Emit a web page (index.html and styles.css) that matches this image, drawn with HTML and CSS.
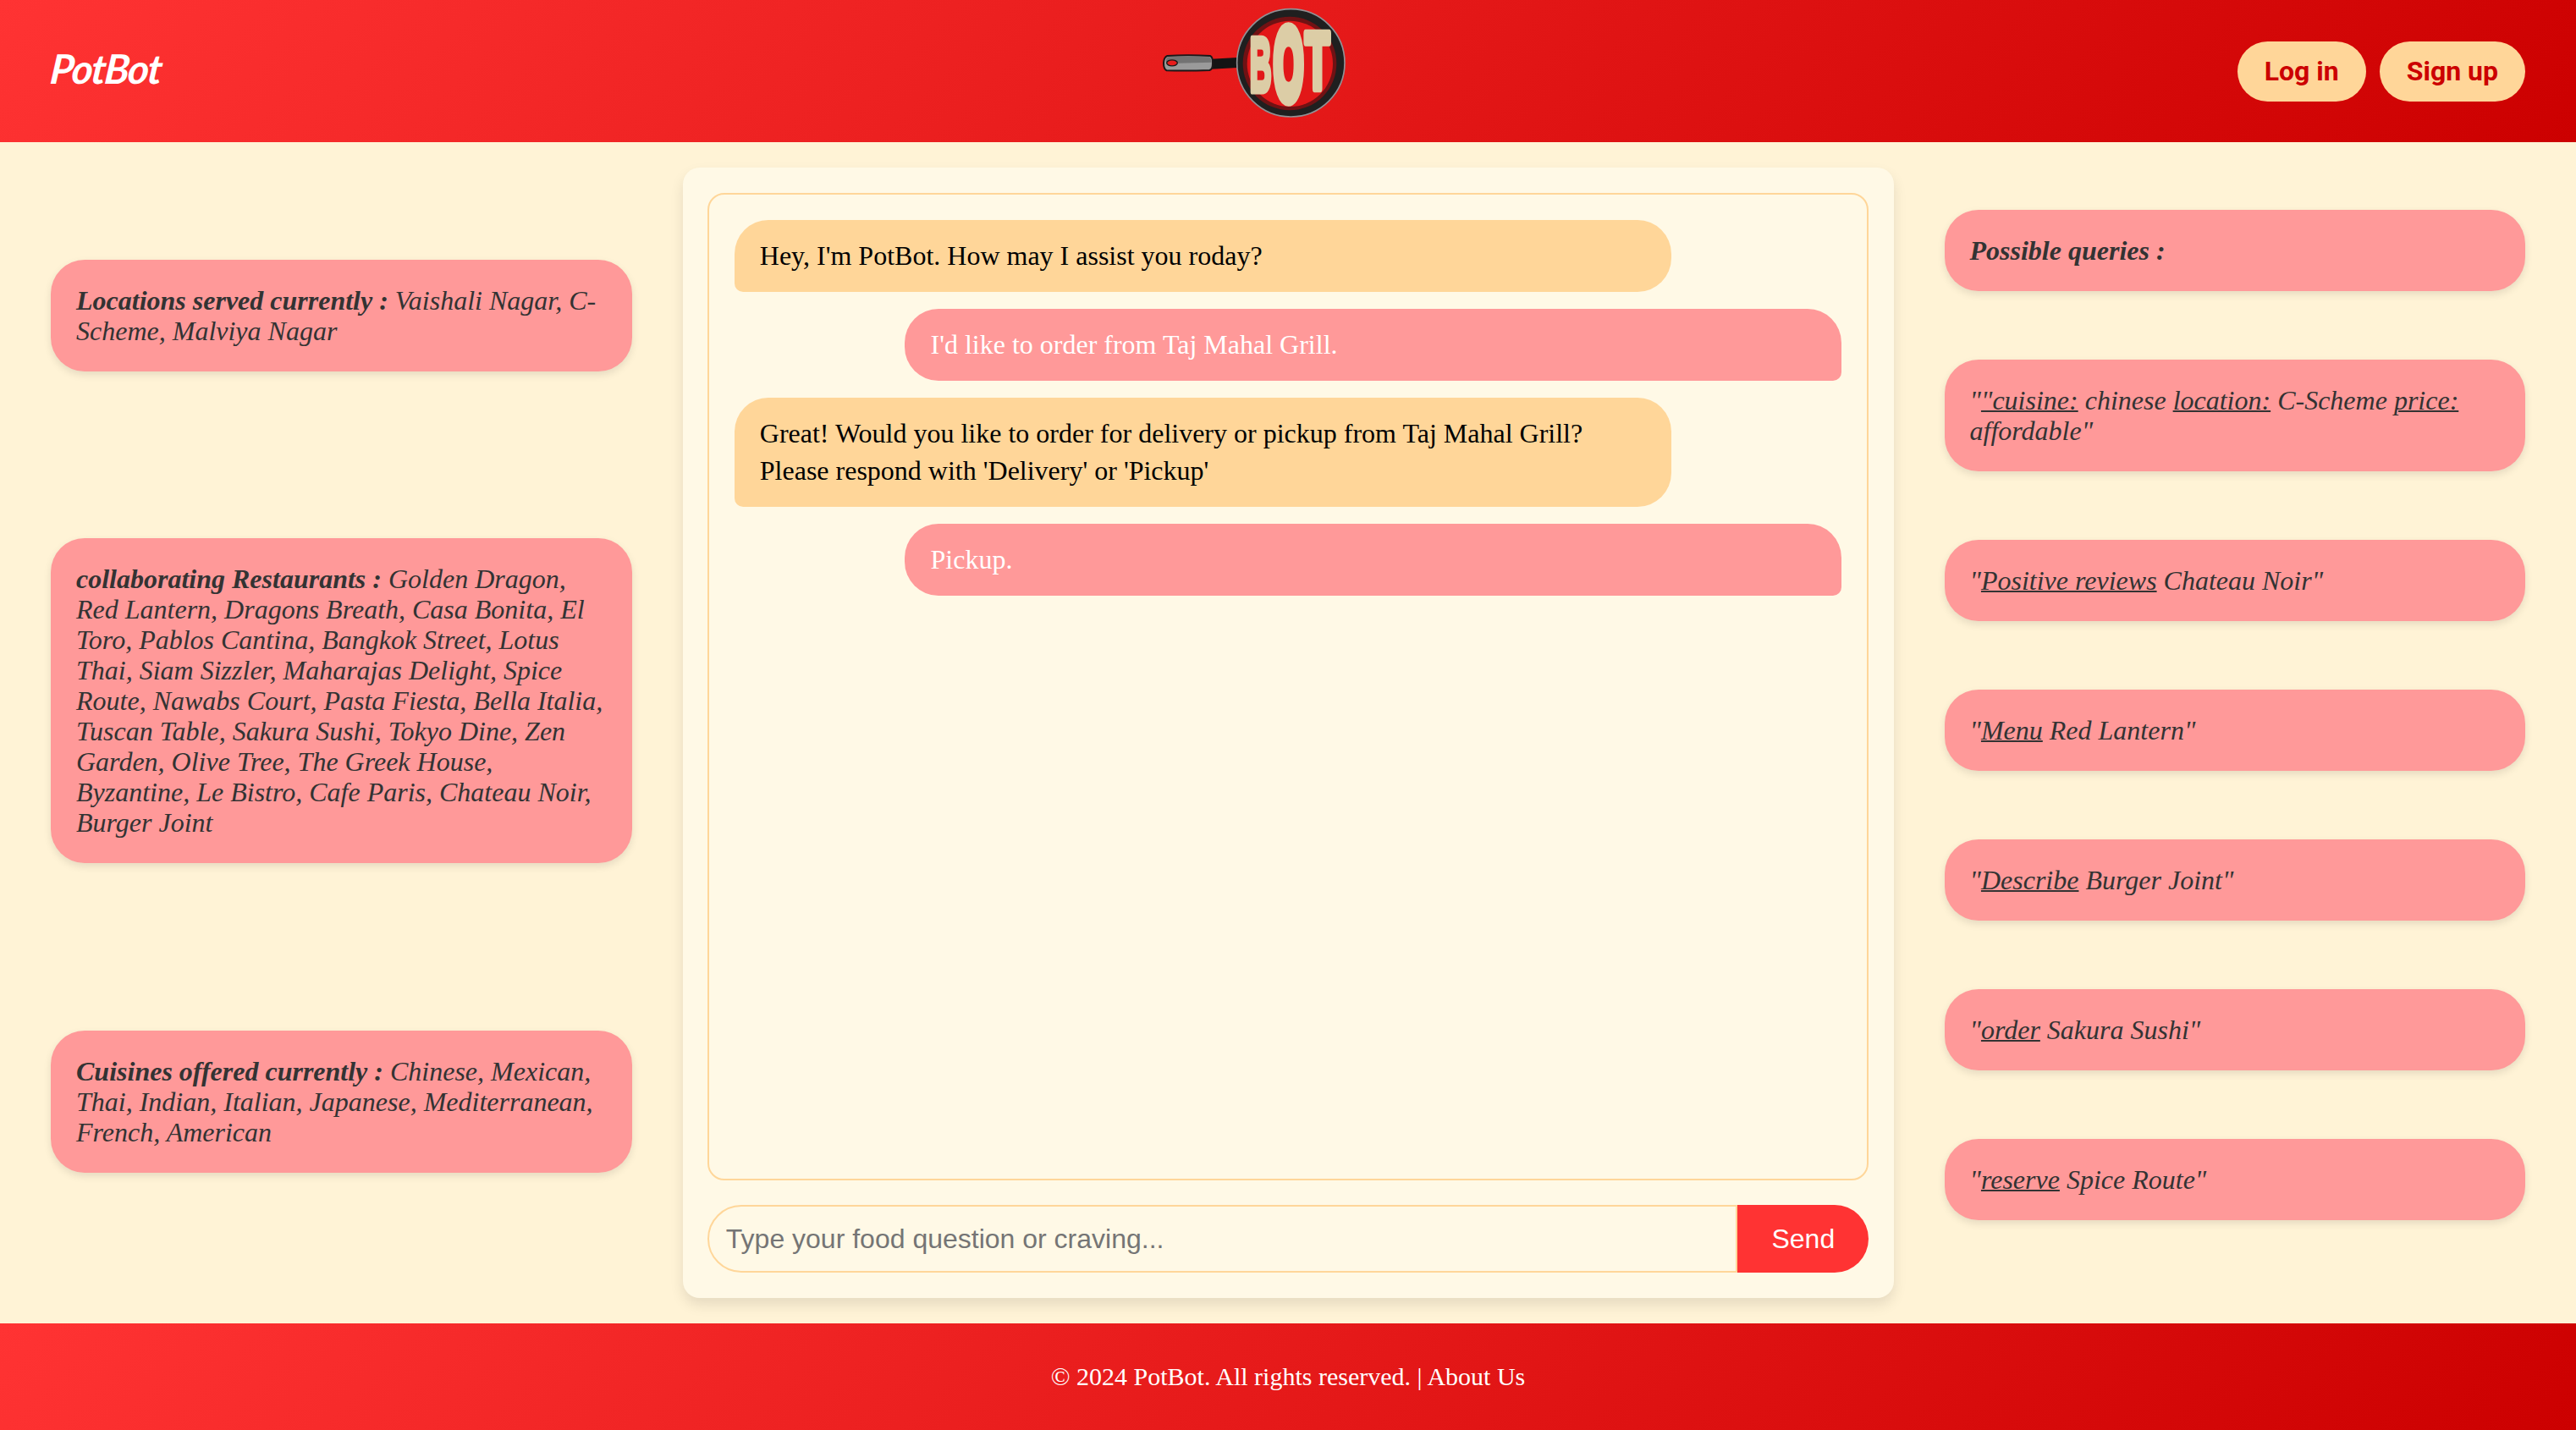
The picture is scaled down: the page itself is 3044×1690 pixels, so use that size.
FILE: index.html
```html
<!DOCTYPE html>
<html lang="en">
<head>
<meta charset="utf-8">
<title>PotBot</title>
<link rel="stylesheet" href="styles.css">
</head>
<body>
<header class="header">
  <div class="brand"><span class="brand-name">PotBot</span></div>
  <svg class="logo" viewBox="0 0 780 504" aria-label="PotBot logo">
    <path d="M244 209 L336 204 V240 L244 245Z" fill="#141414"/>
    <path d="M88 198 Q160 194 240 198 Q250 202 249 224 Q249 246 238 249 Q160 252 86 250 Q75 244 75 224 Q76 202 88 198Z" fill="#9a9a9a" stroke="#1b1718" stroke-width="6"/>
    <path d="M90 202 Q160 198 238 202 Q245 208 245 221 L126 224 Q124 212 106 211 Q92 211 84 220 Q82 206 90 202Z" fill="#737373"/>
    <ellipse cx="105" cy="223" rx="19" ry="10.500" fill="#e81c1c" stroke="#1b1718" stroke-width="4"/>
    <circle cx="526" cy="223" r="191" fill="#1f1f1f" stroke="#919195" stroke-width="5"/>
    <circle cx="522" cy="225" r="166" fill="#701214"/>
    <circle cx="523" cy="226" r="152" fill="#e21718"/>
    <g class="logo-letters">
      <text stroke-width="8" transform="translate(380 323) scale(1.07 2.7)">B</text>
      <text stroke-width="13" transform="translate(466 351) scale(1.34 3.57)">O</text>
      <text stroke-width="10" transform="translate(577 315) scale(1.42 2.81)">T</text>
    </g>
  </svg>
  <nav class="actions">
    <a class="pill">Log in</a>
    <a class="pill">Sign up</a>
  </nav>
</header>
<main class="main">
  <aside class="side side-left">
    <div class="card"><b>Locations served currently :</b> Vaishali Nagar, C-Scheme, Malviya Nagar</div>
    <div class="card"><b>collaborating Restaurants :</b> Golden Dragon, Red Lantern, Dragons Breath, Casa Bonita, El Toro, Pablos Cantina, Bangkok Street, Lotus Thai, Siam Sizzler, Maharajas Delight, Spice Route, Nawabs Court, Pasta Fiesta, Bella Italia, Tuscan Table, Sakura Sushi, Tokyo Dine, Zen Garden, Olive Tree, The Greek House, Byzantine, Le Bistro, Cafe Paris, Chateau Noir, Burger Joint</div>
    <div class="card"><b>Cuisines offered currently :</b> Chinese, Mexican, Thai, Indian, Italian, Japanese, Mediterranean, French, American</div>
  </aside>
  <section class="panel">
    <div class="chat">
      <p class="msg bot">Hey, I'm PotBot. How may I assist you roday?</p>
      <p class="msg user">I'd like to order from Taj Mahal Grill.</p>
      <p class="msg bot">Great! Would you like to order for delivery or pickup from Taj Mahal Grill? Please respond with 'Delivery' or 'Pickup'</p>
      <p class="msg user">Pickup.</p>
    </div>
    <form class="composer">
      <input class="field" type="text" placeholder="Type your food question or craving...">
      <button class="send" type="button">Send</button>
    </form>
  </section>
  <aside class="side side-right">
    <div class="card"><b>Possible queries :</b></div>
    <div class="card">"<u>"cuisine:</u> chinese <u>location:</u> C-Scheme <u>price:</u> affordable"</div>
    <div class="card">"<u>Positive reviews</u> Chateau Noir"</div>
    <div class="card">"<u>Menu</u> Red Lantern"</div>
    <div class="card">"<u>Describe</u> Burger Joint"</div>
    <div class="card">"<u>order</u> Sakura Sushi"</div>
    <div class="card">"<u>reserve</u> Spice Route"</div>
  </aside>
</main>
<footer class="footer">© 2024 PotBot. All rights reserved. | About Us</footer>
</body>
</html>
```
FILE: styles.css
```css
* { box-sizing: border-box; }
body {
  margin: 0;
  height: 100vh;
  display: grid;
  grid-template-rows: 168px 1fr 126px;
  background: #fff3d6;
  font: 32px/36px "Times New Roman", "Liberation Serif", serif;
}
.header {
  display: grid;
  grid-template-columns: 1290px 260px 1fr;
  align-items: center;
  padding: 0 60px;
  background: linear-gradient(135deg, #ff3333, #cc0000);
}
.brand-name {
  display: inline-block;
  color: #fff;
  font: italic 700 48px/60px "Satisfy", "Lato", cursive;
  letter-spacing: -1.500px;
  transform: translateY(-3px) skewX(-6deg);
}
.logo { width: 260px; height: 168px; display: block; }
.logo-letters {
  font: 700 100px "Liberation Sans", sans-serif;
  fill: #dccda6;
  stroke: #dccda6;
  stroke-linejoin: round;
}
.actions { display: flex; justify-content: flex-end; gap: 16px; }
.pill {
  padding: 17px 32px;
  border-radius: 40px;
  background: #ffd699;
  color: #cc0000;
  font: 700 32px/37px Roboto, sans-serif;
}
.main {
  display: grid;
  grid-template-columns: 686.5px 1fr 686.5px;
  gap: 60px;
  padding: 30px 60px;
  min-height: 0;
}
.side { display: flex; flex-direction: column; justify-content: space-between; }
.side-left { padding: 108.5px 0 148.5px; }
.side-right { padding: 50px 0 91.500px; }
.card {
  padding: 30px;
  border-radius: 40px;
  background: #ff9999;
  color: #333;
  font-style: italic;
  box-shadow: 0 4px 10px rgba(0, 0, 0, 0.1);
}
.card u { text-decoration-thickness: 2px; }
.panel {
  display: flex;
  flex-direction: column;
  gap: 29.500px;
  padding: 30px 29.300px;
  border-radius: 20px;
  background: #fff9e6;
  box-shadow: 0 8px 16px rgba(0, 0, 0, 0.1);
}
.chat {
  flex: 1;
  display: flex;
  flex-direction: column;
  gap: 20px;
  padding: 30px;
  border: 2px solid #ffd699;
  border-radius: 20px;
}
.msg {
  width: calc(80% + 60px);
  margin: 0;
  padding: 20px 30px;
  border-radius: 40px;
  line-height: 44.8px;
}
.bot { background: #ffd699; color: #000; border-bottom-left-radius: 10px; }
.user { align-self: flex-end; background: #ff9999; color: #fff; border-bottom-right-radius: 10px; }
.composer { display: flex; height: 80px; }
.field {
  flex: 1;
  padding: 0 20px;
  border: 2px solid #ffd699;
  border-radius: 40px 0 0 40px;
  background: #fff9e6;
  font: 32px "Liberation Sans", Arial, sans-serif;
}
.field::placeholder { color: #757575; }
.send {
  padding: 0 40px;
  border: 0;
  border-radius: 0 40px 40px 0;
  background: #ff3333;
  color: #fff;
  font: 32px "Liberation Sans", Arial, sans-serif;
}
.footer {
  display: flex;
  align-items: center;
  justify-content: center;
  background: linear-gradient(135deg, #ff3333, #cc0000);
  color: #fff;
  font-size: 30px;
}
```
